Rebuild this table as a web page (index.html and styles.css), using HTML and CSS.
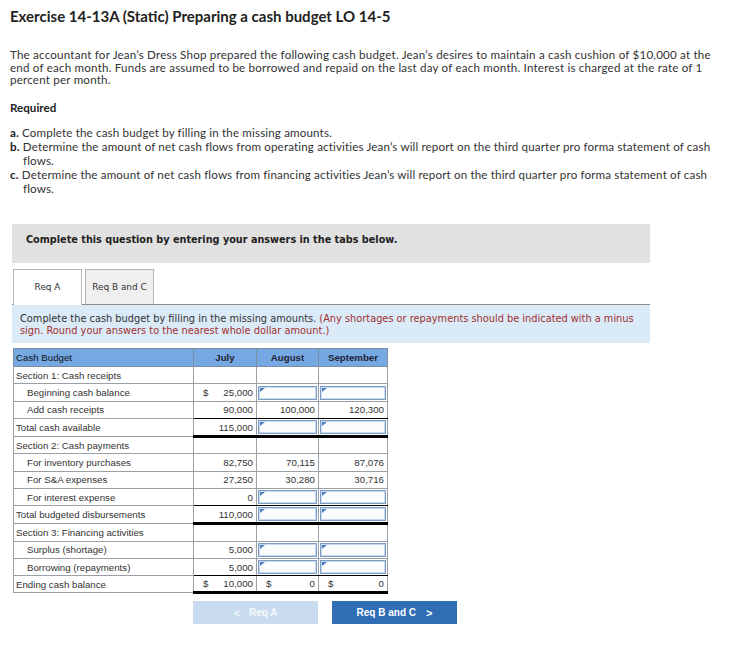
FILE: index.html
```html
<!DOCTYPE html>
<html>
<head>
<meta charset="utf-8">
<link rel="stylesheet" href="styles.css">
</head>
<body>
<div class="page">
  <h1 class="title">Exercise 14-13A (Static) Preparing a cash budget LO 14-5</h1>
  <p class="intro">The accountant for Jean’s Dress Shop prepared the following cash budget. Jean’s desires to maintain a cash cushion of $10,000 at the<br>end of each month. Funds are assumed to be borrowed and repaid on the last day of each month. Interest is charged at the rate of 1<br>percent per month.</p>
  <p class="req-head">Required</p>
  <ul class="req-list">
    <li><b>a.</b> Complete the cash budget by filling in the missing amounts.</li>
    <li><b>b.</b> Determine the amount of net cash flows from operating activities Jean’s will report on the third quarter pro forma statement of cash<br>flows.</li>
    <li><b>c.</b> Determine the amount of net cash flows from financing activities Jean’s will report on the third quarter pro forma statement of cash<br>flows.</li>
  </ul>

  <div class="prompt">Complete this question by entering your answers in the tabs below.</div>

  <div class="tabs">
    <div class="tab active">Req A</div>
    <div class="tab">Req B and C</div>
  </div>
  <div class="instr">Complete the cash budget by filling in the missing amounts. <span class="red">(Any shortages or repayments should be indicated with a minus<br>sign. Round your answers to the nearest whole dollar amount.)</span></div>

  <table class="budget">
    <colgroup><col class="c-label"><col class="c-jul"><col class="c-aug"><col class="c-sep"></colgroup>
    <thead>
      <tr><th class="lbl">Cash Budget</th><th>July</th><th>August</th><th>September</th></tr>
    </thead>
    <tbody>
      <tr><td class="lbl">Section 1: Cash receipts</td><td></td><td></td><td></td></tr>
      <tr><td class="lbl ind">Beginning cash balance</td><td class="num"><span class="dol">$</span>25,000</td><td class="in"><div class="box"></div></td><td class="in"><div class="box"></div></td></tr>
      <tr class="ul"><td class="lbl ind">Add cash receipts</td><td class="num">90,000</td><td class="num">100,000</td><td class="num">120,300</td></tr>
      <tr class="thick"><td class="lbl">Total cash available</td><td class="num">115,000</td><td class="in"><div class="box"></div></td><td class="in"><div class="box"></div></td></tr>
      <tr><td class="lbl">Section 2: Cash payments</td><td></td><td></td><td></td></tr>
      <tr><td class="lbl ind">For inventory purchases</td><td class="num">82,750</td><td class="num">70,115</td><td class="num">87,076</td></tr>
      <tr><td class="lbl ind">For S&amp;A expenses</td><td class="num">27,250</td><td class="num">30,280</td><td class="num">30,716</td></tr>
      <tr class="ul"><td class="lbl ind">For interest expense</td><td class="num">0</td><td class="in"><div class="box"></div></td><td class="in"><div class="box"></div></td></tr>
      <tr class="thick"><td class="lbl">Total budgeted disbursements</td><td class="num">110,000</td><td class="in"><div class="box"></div></td><td class="in"><div class="box"></div></td></tr>
      <tr><td class="lbl">Section 3: Financing activities</td><td></td><td></td><td></td></tr>
      <tr><td class="lbl ind">Surplus (shortage)</td><td class="num">5,000</td><td class="in"><div class="box"></div></td><td class="in"><div class="box"></div></td></tr>
      <tr class="ul"><td class="lbl ind">Borrowing (repayments)</td><td class="num">5,000</td><td class="in"><div class="box"></div></td><td class="in"><div class="box"></div></td></tr>
      <tr class="thick"><td class="lbl">Ending cash balance</td><td class="num"><span class="dol">$</span>10,000</td><td class="num"><span class="dol">$</span>0</td><td class="num"><span class="dol">$</span>0</td></tr>
    </tbody>
  </table>

  <div class="nav">
    <div class="btn prev"><span class="chev">&lt;</span>Req A</div>
    <div class="btn next">Req B and C<span class="chev">&gt;</span></div>
  </div>
</div>
</body>
</html>
```

FILE: styles.css
```css
* { box-sizing: border-box; }
body {
  margin: 0;
  background: #fff;
  font-family: Lato, "Open Sans", sans-serif;
  color: #333;
}
.page { padding: 0 10px; }
.title {
  margin: 7px 0 0;
  font-size: 15px;
  line-height: 18px;
  font-weight: bold;
  color: #222;
}
.intro {
  margin: 24px 0 0;
  font-size: 11.6px;
  line-height: 12.5px;
  letter-spacing: 0.2px;
  white-space: nowrap;
}
.req-head {
  margin: 15px 0 0;
  font-size: 11.6px;
  line-height: 12px;
  font-weight: bold;
  color: #222;
}
.req-list {
  list-style: none;
  margin: 12px 0 0;
  padding: 0;
  font-size: 11.6px;
  line-height: 14px;
  letter-spacing: 0.15px;
  white-space: nowrap;
}
.req-list li { padding-left: 13px; text-indent: -13px; }
.req-list b { color: #222; }

.prompt {
  margin: 28px 0 0 2px;
  width: 638px;
  height: 39px;
  background: #e1e1e1;
  font-family: "DejaVu Sans", Verdana, sans-serif;
  font-weight: bold;
  font-size: 9.7px;
  line-height: 12px;
  color: #222;
  padding: 10px 0 0 14px;
}
.tabs {
  display: flex;
  gap: 3px;
  margin: 6px 0 0 3px;
  position: relative;
  z-index: 1;
}
.tab {
  width: 69px;
  height: 35px;
  border: 1px solid #b5b5b5;
  border-bottom: none;
  background: #efefef;
  font-family: "DejaVu Sans", Verdana, sans-serif;
  font-size: 8.9px;
  color: #333;
  display: flex;
  align-items: center;
  justify-content: center;
  white-space: nowrap;
}
.tab.active { background: #fff; height: 36px; margin-bottom: -1px; }
.instr {
  margin-left: 2px;
  width: 638px;
  height: 39px;
  background: #daeaf7;
  border-top: 1px solid #8c8c8c;
  font-family: "DejaVu Sans", Verdana, sans-serif;
  font-size: 9.8px;
  line-height: 12px;
  padding: 8px 8px 0 8px;
  color: #333;
  white-space: nowrap;
}
.red { color: #a1302f; }

.budget {
  margin: 5px 0 0 3px;
  border-collapse: collapse;
  font-family: "Liberation Sans", Arial, sans-serif;
  font-size: 9.7px;
  color: #333;
  table-layout: fixed;
  width: 374px;
  border: 1px solid #7f8fa3;
}
.c-label { width: 180px; }
.c-jul { width: 63px; }
.c-aug { width: 62px; }
.c-sep { width: 69px; }
.budget th {
  height: 18.7px;
  background: #76a9e4;
  border: 1px solid #7f8fa3;
  font-weight: bold;
  color: #223;
  padding: 0;
  text-align: center;
}
.budget th.lbl { text-align: left; padding-left: 2px; font-weight: normal; color: #111; }
.budget td {
  height: 17.3px;
  border: 1px solid #9aa0a8;
  padding: 0;
  white-space: nowrap;
}
.budget td.lbl { padding-left: 2px; }
.budget td.ind { padding-left: 13px; }
.budget td.num { text-align: right; padding-right: 3px; }
.dol { float: left; padding-left: 9px; }
.budget td.in { padding: 1px; }
.box {
  position: relative;
  height: 14px;
  border: 1px solid #7d9cc4;
  box-shadow: inset 0 0 0 1px #c9daee;
  background: #fafcfe;
}
.box::before {
  content: "";
  position: absolute;
  left: 1px;
  top: 1px;
  border-left: 5px solid #4d80c2;
  border-top: 0 solid transparent;
  border-bottom: 4px solid transparent;
}
.ul td:not(.lbl) { border-bottom: 1px solid #000; }
.thick td:not(.lbl) { border-bottom: 3px solid #000; }

.nav {
  display: flex;
  gap: 14px;
  margin: 7px 0 0 183px;
}
.btn {
  width: 125px;
  height: 23px;
  display: flex;
  align-items: center;
  justify-content: center;
  font-family: "Liberation Sans", Arial, sans-serif;
  font-weight: bold;
  font-size: 10px;
  color: #fff;
}
.btn.prev { background: #c9dcef; color: #f4f8fc; }
.btn.next { background: #2f6db5; }
.chev { font-size: 11px; }
.prev .chev { margin-right: 9px; }
.next .chev { margin-left: 10px; }
```
